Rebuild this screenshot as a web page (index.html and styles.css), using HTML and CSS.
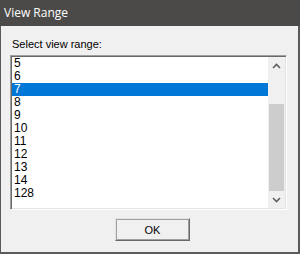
FILE: index.html
```html
<!DOCTYPE html>
<html lang="en">
  <head>
    <meta charset="UTF-8" />
    <meta name="viewport" content="width=device-width, initial-scale=1.0" />
    <title>View Range</title>
    <link rel="stylesheet" href="styles.css">
  </head>
  <body>
    <div class="window">
      <div class="titlebar">View Range</div>
      <div class="content">
        <div class="label">Select view range:</div>
        <div class="listbox">
          <div class="list-items">
            <div class="item">5</div>
            <div class="item">6</div>
            <div class="item selected">7</div>
            <div class="item">8</div>
            <div class="item">9</div>
            <div class="item">10</div>
            <div class="item">11</div>
            <div class="item">12</div>
            <div class="item">13</div>
            <div class="item">14</div>
            <div class="item">128</div>
          </div>
          <div class="scrollbar">
            <div class="arrow">
              <svg width="9" height="6" viewBox="0 0 9 6"><path d="M1 5 L4.5 1.5 L8 5" fill="none" stroke="#606060" stroke-width="1.6"/></svg>
            </div>
            <div class="track">
              <div class="thumb"></div>
            </div>
            <div class="arrow">
              <svg width="9" height="6" viewBox="0 0 9 6"><path d="M1 1 L4.5 4.5 L8 1" fill="none" stroke="#606060" stroke-width="1.6"/></svg>
            </div>
          </div>
        </div>
        <div class="buttons">
          <button class="btn">OK</button>
        </div>
      </div>
    </div>
  </body>
</html>
```

FILE: styles.css
```css
html,
body {
  margin: 0;
  padding: 0;
}

body {
  width: 300px;
  height: 254px;
  overflow: hidden;
  font-family: "Liberation Sans", Arial, sans-serif;
}

.window {
  width: 300px;
  height: 254px;
  box-sizing: border-box;
  display: flex;
  flex-direction: column;
  background: #f0f0f0;
  border-left: 1px solid #5a5a5a;
  border-right: 2px solid #5a5a5a;
  border-bottom: 2px solid #5a5a5a;
}

.titlebar {
  height: 26px;
  line-height: 26px;
  padding-left: 4px;
  background: #4b4a48;
  color: #fff;
  font-family: "Open Sans", "Liberation Sans", sans-serif;
  font-size: 12px;
  margin-left: -1px;
  margin-right: -2px;
}

.content {
  flex: 1;
  padding: 11px 0 0 9px;
}

.label {
  font-size: 11px;
  line-height: 15px;
  padding-left: 2px;
  color: #000;
  margin-bottom: 3px;
}

.listbox {
  display: flex;
  width: 277px;
  height: 155px;
  box-sizing: border-box;
  border-top: 1px solid #a0a0a0;
  border-left: 1px solid #a0a0a0;
  border-right: 1px solid #fff;
  border-bottom: 1px solid #fff;
  box-shadow: inset 1px 1px #696969, inset -1px -1px #e3e3e3;
  padding: 1px;
  background: #fff;
}

.list-items {
  flex: 1;
}

.item {
  height: 13px;
  line-height: 13px;
  font-size: 12px;
  padding-left: 2px;
  color: #000;
}

.item.selected {
  background: #0078d7;
  color: #fff;
}

.scrollbar {
  width: 17px;
  display: flex;
  flex-direction: column;
  background: #f0f0f0;
}

.arrow {
  height: 17px;
  display: flex;
  align-items: center;
  justify-content: center;
}

.track {
  flex: 1;
  display: flex;
  flex-direction: column;
  justify-content: flex-end;
  padding: 0 1px;
}

.thumb {
  height: 87px;
  background: #cdcdcd;
}

.buttons {
  display: flex;
  padding-left: 105px;
  margin-top: 8px;
}

.btn {
  width: 75px;
  height: 23px;
  padding: 0;
  font-family: "Liberation Sans", Arial, sans-serif;
  font-size: 11px;
  color: #000;
  background: #f0f0f0;
  border: 1px solid;
  border-color: #e3e3e3 #696969 #696969 #e3e3e3;
  box-shadow: inset 1px 1px #a0a0a0, inset -1px -1px #a0a0a0;
  border-radius: 0;
}
```
